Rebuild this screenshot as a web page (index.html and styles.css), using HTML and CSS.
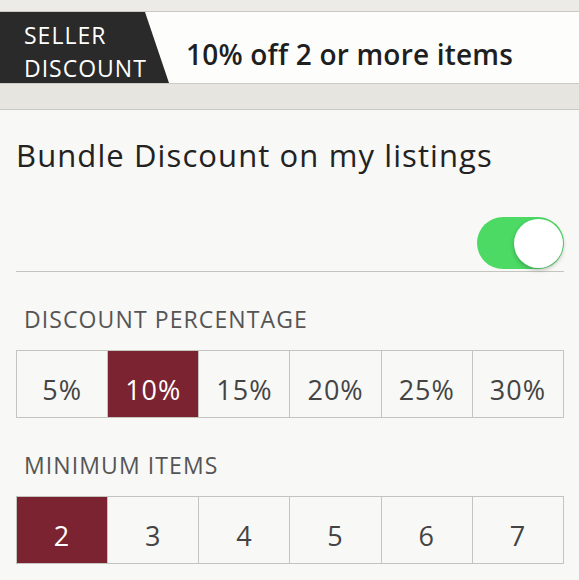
FILE: index.html
```html
<!DOCTYPE html>
<html lang="en">
<head>
    <meta charset="UTF-8">
    <meta name="viewport" content="width=device-width, initial-scale=1.0">
    <title>Bundle Discount</title>
    <link rel="stylesheet" href="styles.css">
</head>
<body>
    <div class="top-band"></div>

    <div class="banner">
        <div class="banner-label">SELLER<br>DISCOUNT</div>
        <div class="banner-text">10% off 2 or more items</div>
    </div>

    <div class="texture-band"></div>

    <div class="settings">
        <h1 class="settings-title">Bundle Discount on my listings</h1>

        <div class="toggle-row">
            <div class="toggle on">
                <div class="toggle-knob"></div>
            </div>
        </div>

        <div class="group-label">DISCOUNT PERCENTAGE</div>
        <div class="choices">
            <div class="choice">5%</div>
            <div class="choice selected">10%</div>
            <div class="choice">15%</div>
            <div class="choice">20%</div>
            <div class="choice">25%</div>
            <div class="choice">30%</div>
        </div>

        <div class="group-label">MINIMUM ITEMS</div>
        <div class="choices">
            <div class="choice selected">2</div>
            <div class="choice">3</div>
            <div class="choice">4</div>
            <div class="choice">5</div>
            <div class="choice">6</div>
            <div class="choice">7</div>
        </div>
    </div>
</body>
</html>
```

FILE: styles.css
```css
* {
    box-sizing: border-box;
}

body {
    margin: 0;
    background-color: #f8f8f6;
    font-family: "Open Sans", "Noto Sans", sans-serif;
    color: #222;
}

.top-band {
    height: 12px;
    background-color: #ecebe7;
    border-bottom: 1px solid #c9c9c3;
}

.banner {
    display: flex;
    height: 72px;
    background-color: #fdfdfc;
    border-bottom: 1px solid #cbcbc5;
}

.banner-label {
    width: 169px;
    padding: 7px 0 0 24px;
    background-color: #2a2a2a;
    clip-path: polygon(0 0, 145px 0, 169px 100%, 0 100%);
    color: #fff;
    font-size: 23px;
    letter-spacing: 1px;
    line-height: 33px;
}

.banner-text {
    padding: 26px 0 0 17px;
    font-size: 28px;
    font-weight: 600;
    letter-spacing: 0.2px;
    line-height: 32px;
    color: #1f1f1f;
}

.texture-band {
    height: 26px;
    background-color: #e6e5df;
    border-bottom: 1px solid #c9c9c3;
}

.settings {
    padding: 0 15px 0 16px;
}

.settings-title {
    margin: 27px 0 0;
    font-size: 31px;
    font-weight: 400;
    letter-spacing: 1.1px;
    line-height: 36px;
    color: #222;
}

.toggle-row {
    display: flex;
    justify-content: flex-end;
    padding: 44px 0 2px;
    border-bottom: 1px solid #c5c5bf;
}

.toggle {
    display: flex;
    justify-content: flex-end;
    align-items: center;
    width: 87px;
    height: 52px;
    padding: 1px;
    border-radius: 26px;
    background-color: #4cd964;
}

.toggle-knob {
    width: 49px;
    height: 49px;
    border-radius: 50%;
    background-color: #fff;
    box-shadow: 0 2px 4px rgba(0, 0, 0, 0.25);
}

.group-label {
    padding: 34px 0 0 8px;
    font-size: 23px;
    letter-spacing: 1.1px;
    line-height: 26px;
    color: #555;
}

.choices {
    display: grid;
    grid-template-columns: repeat(6, 1fr);
    margin-top: 18px;
    border-top: 1px solid #c5c5bf;
    border-left: 1px solid #c5c5bf;
}

.choice {
    height: 67px;
    padding-top: 23px;
    border-right: 1px solid #c5c5bf;
    border-bottom: 1px solid #c5c5bf;
    text-align: center;
    font-size: 27px;
    letter-spacing: 1px;
    line-height: 31px;
    color: #444;
}

.choice.selected {
    background-color: #7b2330;
    color: #fff;
}
```
